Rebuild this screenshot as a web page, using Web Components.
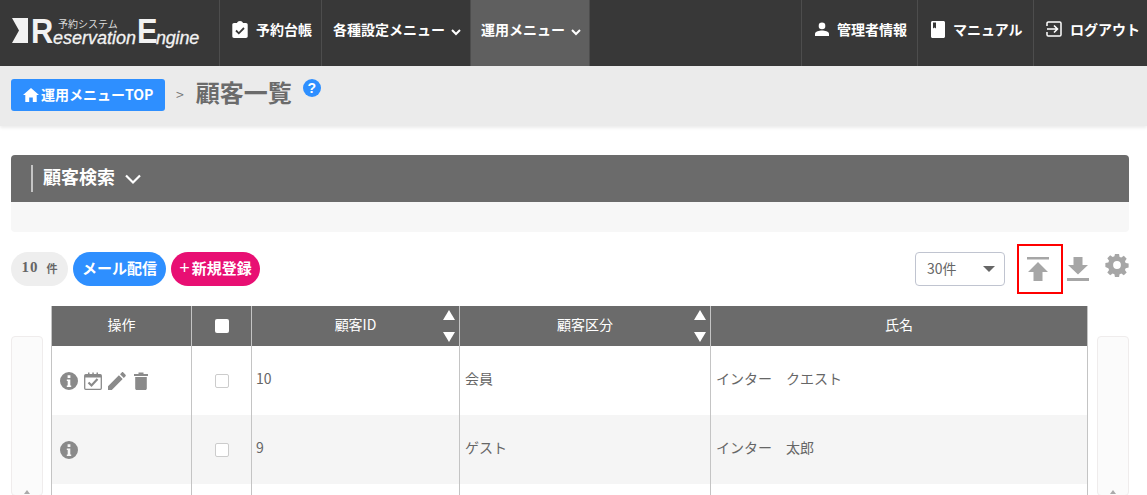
<!DOCTYPE html>
<html lang="ja">
<head>
<meta charset="utf-8">
<title>顧客一覧</title>
<style>
html, body { margin: 0; height: 100%; overflow: hidden; background: #fff; }
body { font-family: "Noto Sans CJK JP", "Noto Sans", sans-serif; font-size: 14px; color: #666; }
</style>
</head>
<body>
<app-header>
  <nav-item slot="left" icon="clipboard" style="width:102px;padding-left:12px">予約台帳</nav-item>
  <nav-item slot="left" caret style="width:149px">各種設定メニュー</nav-item>
  <nav-item slot="left" caret active style="width:119px">運用メニュー</nav-item>
  <nav-item slot="right" icon="person" style="width:116px">管理者情報</nav-item>
  <nav-item slot="right" icon="book" style="width:116px">マニュアル</nav-item>
  <nav-item slot="right" icon="logout" style="width:114px;padding-left:12px">ログアウト</nav-item>
</app-header>
<bread-crumb>顧客一覧</bread-crumb>
<page-main>
  <search-panel>顧客検索</search-panel>
  <list-toolbar></list-toolbar>
  <customer-table></customer-table>
</page-main>

<script>
const icons = {
  clipboard: '<svg width="16" height="17" viewBox="0 0 16 17"><path fill="#fff" d="M2 2h3C5.300.9 6.500 0 8 0s2.700.9 3 2h3c1 0 1.700.8 1.700 1.700v11.600c0 1-.8 1.700-1.700 1.700H2c-1 0-1.700-.8-1.700-1.700V3.700C.3 2.800 1 2 2 2z"/><path fill="none" stroke="#383838" stroke-width="1.800" d="M4 9.500l2.800 2.800L12 7"/></svg>',
  person: '<svg width="14" height="14" viewBox="0 0 16 16"><circle fill="#fff" cx="8" cy="4.500" r="3.800"/><path fill="#fff" d="M0 16v-2.500c0-2.500 5-3.700 8-3.700s8 1.200 8 3.700V16z"/></svg>',
  book: '<svg width="14" height="17" viewBox="0 0 14 17"><path fill="#fff" fill-rule="evenodd" d="M1.500 0h11c.8 0 1.500.7 1.500 1.500v14c0 .8-.7 1.500-1.500 1.500h-11C.7 17 0 16.300 0 15.500v-14C0 .7.7 0 1.500 0zM2 1.500v6l1.500-1 1.500 1v-6z"/></svg>',
  logout: '<svg width="16" height="16" viewBox="0 0 16 16"><path fill="none" stroke="#fff" stroke-width="1.500" d="M1 5V2.300C1 1.600 1.600 1 2.300 1h11.400c.7 0 1.300.6 1.300 1.300v11.400c0 .7-.6 1.300-1.300 1.300H2.300c-.7 0-1.300-.6-1.300-1.300V11"/><path fill="none" stroke="#fff" stroke-width="1.600" d="M1 8h10M8 4.500L11.500 8 8 11.500"/></svg>',
  caret: '<svg width="10" height="7" viewBox="0 0 10 7"><path fill="none" stroke="#fff" stroke-width="2" d="M1 1l4 4 4-4"/></svg>',
  info: '<svg width="18" height="18" viewBox="0 0 18 18"><path fill="#8a8a8a" fill-rule="evenodd" d="M9 0a9 9 0 1 1 0 18A9 9 0 0 1 9 0zM7.600 3.200v2.800h2.800V3.200zM6.800 7.400v1.600h.9v4.400h-.9V15h4.400v-1.600h-.9V7.400z"/></svg>',
  calendar: '<svg width="18" height="18" viewBox="0 0 18 18"><rect x=".7" y="2.700" width="16.600" height="14.600" rx="1" fill="none" stroke="#8a8a8a" stroke-width="1.300"/><path fill="#8a8a8a" d="M1 3h16v2.500H1zM4 .5h1.500v3H4zM8.300.5h1.500v3H8.300zM12.500.5H14v3h-1.500z"/><path fill="none" stroke="#8a8a8a" stroke-width="2.200" d="M4.500 10.500l3 3 6-6.500"/></svg>',
  pencil: '<svg width="18" height="18" viewBox="0 0 19 19"><path fill="#8a8a8a" d="M0 19v-4L11.500 3.500l4 4L4 19zM12.700 2.300L14.500.5c.5-.5 1.200-.5 1.700 0l2.300 2.300c.5.500.5 1.200 0 1.700l-1.800 1.800z"/></svg>',
  trash: '<svg width="14" height="18" viewBox="0 0 14 18"><path fill="#8a8a8a" d="M0 2h4.500V.5h5V2H14v2H0zM1.200 5h11.600v11.500c0 .8-.7 1.500-1.500 1.500H2.700c-.8 0-1.500-.7-1.500-1.500z"/></svg>',
  home: '<svg width="16" height="14" viewBox="0 0 16 14"><path fill="#fff" d="M8 0l8 7h-2.300v7H9.800V9.500H6.200V14H2.300V7H0z"/></svg>',
  upload: '<svg width="22" height="24" viewBox="0 0 22 24"><path fill="#a6a6a6" d="M0 0h22v2.500H0zM11 5l10 10h-5.500v9h-9v-9H1z"/></svg>',
  download: '<svg width="22" height="24" viewBox="0 0 22 24"><path fill="#a6a6a6" d="M6.500 0h9v8H21L11 17.500 1 8h5.500zM0 21h22v3H0z"/></svg>',
  gear: '<svg width="24" height="24" viewBox="-1 -1 26 26"><path fill="#a6a6a6" fill-rule="evenodd" d="M9.800 0h4.400l.6 3.200 1.900.8 2.700-1.900 3.100 3.100-1.900 2.700.8 1.900 3.200.6v4.400l-3.200.6-.8 1.900 1.900 2.700-3.100 3.100-2.700-1.900-1.900.8-.6 3.200H9.800l-.6-3.200-1.900-.8-2.700 1.900-3.100-3.100 1.900-2.700-.8-1.900L-.6 14.200V9.800l3.200-.6.8-1.900L1.500 4.600l3.100-3.100 2.700 1.900 1.900-.8zM12 7.800a4.200 4.200 0 1 0 0 8.400 4.200 4.200 0 0 0 0-8.400z"/></svg>'
};

class AppHeader extends HTMLElement {
  connectedCallback() {
    this.attachShadow({ mode: 'open' }).innerHTML = `
    <style>
      :host { display: flex; height: 66px; background: #383838; color: #fff; }
      .logo { width: 220px; flex: none; box-sizing: border-box; padding: 18px 0 0 12px; border-right: 1px solid #4d4d4d; display: flex; align-items: flex-start; font-family: "Liberation Sans", sans-serif; line-height: 1; color: #f2f2f2; }
      .mark { margin: 0 3px 0 0; flex: none; }
      .big { font-size: 35px; line-height: 25px; height: 25px; font-weight: 700; display: inline-block; transform: scaleX(.88); transform-origin: left; }
      .r { width: 22px; }
      .rest { display: flex; flex-direction: column; width: 84px; }
      .small { font: 10px/11px "Noto Sans CJK JP", sans-serif; margin: 0 0 0 5px; height: 11px; color: #ddd; }
      .it { font-size: 18px; line-height: 14px; font-style: italic; margin-top: 2px; -webkit-text-stroke: .3px #f2f2f2; }
      .e { width: 19px; }
      .ngine { font-size: 18px; line-height: 14px; font-style: italic; margin-top: 13px; letter-spacing: -.2px; -webkit-text-stroke: .3px #f2f2f2; }
      nav { display: flex; }
      .space { flex: 1; }
    </style>
    <div class="logo">
      <svg class="mark" width="16" height="25" viewBox="0 0 16 25"><path fill="#f2f2f2" d="M0 0h16v25H0l7-12.500z"/></svg>
      <span class="big r">R</span>
      <span class="rest"><span class="small">予約システム</span><span class="it">eservation</span></span>
      <span class="big e">E</span><span class="ngine">ngine</span>
    </div>
    <nav><slot name="left"></slot></nav>
    <div class="space"></div>
    <nav><slot name="right"></slot></nav>`;
  }
}

class NavItem extends HTMLElement {
  connectedCallback() {
    const icon = this.getAttribute('icon');
    this.attachShadow({ mode: 'open' }).innerHTML = `
    <style>
      :host { display: flex; align-items: center; gap: 8px; box-sizing: border-box; height: 66px; padding: 0 0 8px 11px; border-right: 1px solid #4d4d4d; font-weight: 700; font-size: 14px; color: #fff; }
      :host([active]) { background: #5f5f5f; padding-left: 10px; }
      :host([slot="right"]) { border-right: 0; border-left: 1px solid #4d4d4d; padding-left: 13px; }
      :host([caret]) { gap: 6px; }
      .ic, .ca { display: flex; }
      .ca { margin-top: 6px; }
    </style>
    ${icon ? `<span class="ic">${icons[icon]}</span>` : ''}
    <span class="txt"><slot></slot></span>
    ${this.hasAttribute('caret') ? `<span class="ca">${icons.caret}</span>` : ''}`;
  }
}

class BreadCrumb extends HTMLElement {
  connectedCallback() {
    this.attachShadow({ mode: 'open' }).innerHTML = `
    <style>
      :host { display: flex; align-items: flex-start; height: 60px; box-sizing: border-box; padding: 13px 0 0 11px; background: #ebebeb; box-shadow: 0 2px 3px rgba(0,0,0,.08); position: relative; }
      .top { display: flex; align-items: center; gap: 2px; width: 154px; height: 32px; box-sizing: border-box; padding: 0 0 3px 12px; background: #2e8fff; border-radius: 3px; color: #fff; font-size: 14px; font-weight: 700; white-space: nowrap; }
      .top svg { margin-top: 3px; }
      .sep { margin: 5px 12px 0 11px; color: #777; font-size: 14px; }
      .title { font-size: 24px; font-weight: 700; color: #6b6b6b; line-height: 26px; }
      .help { width: 18px; height: 18px; margin: 0 0 0 11px; border-radius: 50%; background: #2e8fff; color: #fff; font: 700 14px/18px "Liberation Sans", sans-serif; text-align: center; }
    </style>
    <div class="top">${icons.home}<span>運用メニューTOP</span></div>
    <span class="sep">&gt;</span>
    <span class="title"><slot></slot></span>
    <span class="help">?</span>`;
  }
}

class PageMain extends HTMLElement {
  connectedCallback() {
    this.attachShadow({ mode: 'open' }).innerHTML = `
    <style>:host { display: block; padding: 29px 18px 0 11px; }</style><slot></slot>`;
  }
}

class SearchPanel extends HTMLElement {
  connectedCallback() {
    this.attachShadow({ mode: 'open' }).innerHTML = `
    <style>
      :host { display: block; }
      .bar { display: flex; align-items: center; gap: 10px; height: 47px; box-sizing: border-box; padding-left: 20px; background: #6b6b6b; border-radius: 4px 4px 0 0; color: #fff; font-weight: 700; font-size: 18px; }
      .t { border-left: 2px solid #c4c4c4; padding-left: 10px; height: 27px; line-height: 22px; }
      .body { height: 30px; background: #f7f7f7; border-radius: 0 0 4px 4px; }
      svg { display: block; margin-top: 1px; }
    </style>
    <div class="bar"><span class="t"><slot></slot></span>
      <svg width="16" height="11" viewBox="0 0 16 11"><path fill="none" stroke="#fff" stroke-width="2.200" d="M1 1.500l7 7 7-7"/></svg></div>
    <div class="body"></div>`;
  }
}

class ListToolbar extends HTMLElement {
  connectedCallback() {
    this.attachShadow({ mode: 'open' }).innerHTML = `
    <style>
      :host { display: flex; align-items: flex-start; height: 74px; padding-top: 12px; box-sizing: border-box; }
      .pill { display: flex; align-items: center; justify-content: center; height: 34px; border-radius: 17px; padding-bottom: 3px; margin: 8px 5px 0 0; box-sizing: border-box; color: #fff; font-weight: 700; font-size: 15px; white-space: nowrap; }
      .count { width: 57px; background: #eee; color: #666; gap: 8px; font-family: "Liberation Serif", "Noto Sans CJK JP", serif; font-size: 15px; letter-spacing: 1px; }
      .count small { font: 700 11px "Noto Sans CJK JP", sans-serif; letter-spacing: 0; }
      .mail { width: 93px; background: #2e8fff; }
      .new { width: 89px; background: #e80f73; }
      .new b { font: 400 18px "Liberation Sans", sans-serif; margin: 2px 2px 0 0; }
      .space { flex: 1; }
      .sel { width: 90px; height: 34px; margin: 8px 12px 0 0; box-sizing: border-box; border: 1px solid #c0c4d0; border-radius: 4px; display: flex; align-items: center; justify-content: space-between; padding: 0 9px 2px 11px; color: #666; font-size: 14px; background: #fff; }
      .sel i { border: 6px solid transparent; border-top: 6px solid #666; border-bottom: 0; width: 0; height: 0; margin-top: 2px; }
      .hit { width: 46px; height: 50px; box-sizing: border-box; border: 2px solid #f00; padding: 11px 0 0 8px; display: flex; }
      .dl { margin: 13px 0 0 4px; display: flex; }
      .gear { margin: 9px 0 0 16px; display: flex; }
    </style>
    <span class="pill count">10<small>件</small></span>
    <span class="pill mail">メール配信</span>
    <span class="pill new"><b>+</b>新規登録</span>
    <span class="space"></span>
    <span class="sel">30件<i></i></span>
    <span class="hit">${icons.upload}</span>
    <span class="dl">${icons.download}</span>
    <span class="gear">${icons.gear}</span>`;
  }
}

class CustomerTable extends HTMLElement {
  connectedCallback() {
    const sort = '<span class="sort"><i class="up"></i><i class="dn"></i></span>';
    const row = (alt, ops, id, kind, name) => `
      <div class="row ${alt ? 'alt' : ''}">
        <div class="c ops">${ops}</div>
        <div class="c chk"><span class="box"></span></div>
        <div class="c id">${id}</div><div class="c">${kind}</div><div class="c">${name}</div>
      </div>`;
    this.attachShadow({ mode: 'open' }).innerHTML = `
    <style>
      :host { display: flex; gap: 8px; align-items: flex-start; }
      .paddle { flex: none; box-sizing: border-box; width: 32px; height: 160px; margin-top: 30px; padding-top: 153px; background: #fbfbfb; border: 1px solid #efecec; border-radius: 4px; display: flex; justify-content: center; }
      .paddle i { width: 0; height: 0; border: 3px solid transparent; border-bottom: 4px solid #aaa; border-top: 0; }
      .paddle.r { margin-left: 1px; }
      .tbl { width: 1037px; flex: none; border-right: 1px solid #c4c4c4; box-sizing: border-box; }
      .row { display: grid; grid-template-columns: 140px 60px 208px 251px 1fr; height: 69px; }
      .alt { background: #f5f5f5; }
      .head { height: 40px; background: #6b6b6b; color: #fff; }
      .c { border-left: 1px solid #c4c4c4; display: flex; align-items: center; padding: 0 0 6px 5px; font-size: 14px; color: #666; min-width: 0; }
      .c.id { padding-left: 4px; }
      .head .c { justify-content: center; color: #fff; padding: 0 0 5px; position: relative; }
      .c.ops { gap: 6px; padding: 0 0 0 8px; }
      .ops svg:nth-child(4) { margin-left: 2px; }
      .c.chk, .head .c.chk { justify-content: center; padding: 0; }
      .box { width: 14px; height: 14px; box-sizing: border-box; border: 1px solid #ccc; border-radius: 2px; background: #fff; }
      .head .box { border: 0; }
      .sort { position: absolute; right: 4px; top: 4px; bottom: 4px; display: flex; flex-direction: column; justify-content: space-between; }
      .sort i { width: 0; height: 0; border: 6px solid transparent; border-top: 0; border-bottom: 10px solid #fff; }
      .sort i.dn { border-bottom: 0; border-top: 10px solid #fff; }
    </style>
    <div class="paddle"><i></i></div>
    <div class="tbl">
      <div class="row head">
        <div class="c">操作</div>
        <div class="c chk"><span class="box"></span></div>
        <div class="c">顧客ID${sort}</div>
        <div class="c">顧客区分${sort}</div>
        <div class="c">氏名</div>
      </div>
      ${row(false, icons.info + icons.calendar + icons.pencil + icons.trash, '10', '会員', 'インター　クエスト')}
      ${row(true, icons.info, '9', 'ゲスト', 'インター　太郎')}
      ${row(false, '', '', '', '')}
    </div>
    <div class="paddle r"><i></i></div>`;
  }
}

customElements.define('app-header', AppHeader);
customElements.define('nav-item', NavItem);
customElements.define('bread-crumb', BreadCrumb);
customElements.define('page-main', PageMain);
customElements.define('search-panel', SearchPanel);
customElements.define('list-toolbar', ListToolbar);
customElements.define('customer-table', CustomerTable);
</script>
</body>
</html>
